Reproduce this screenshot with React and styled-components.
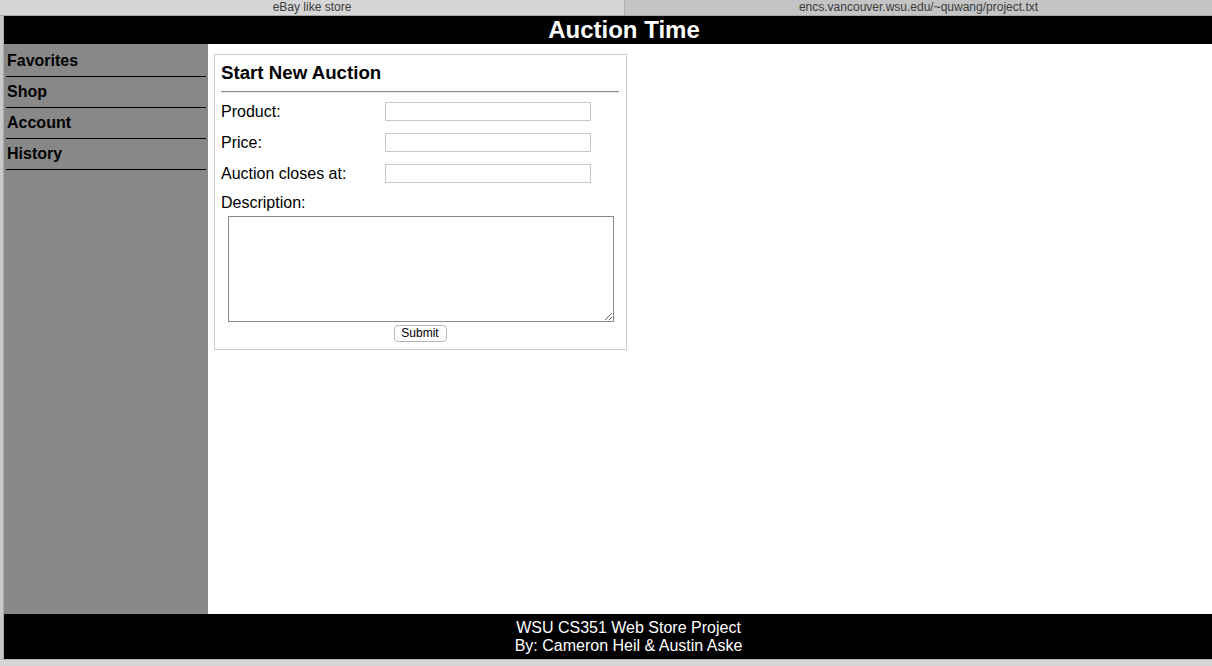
import React from "react"
import styled, { createGlobalStyle } from "styled-components"

const GlobalStyle = createGlobalStyle`
  html, body {
    margin: 0;
    padding: 0;
    background: #fff;
    font-family: "Liberation Sans", Arial, sans-serif;
    overflow: hidden;
  }
`

const Screen = styled.div`
  width: 1212px;
  height: 666px;
  display: flex;
  flex-direction: column;
`

const TabBar = styled.div`
  height: 15px;
  display: flex;
  border-bottom: 1px solid #a6a6a6;
  flex-shrink: 0;
`

const Tab = styled.div`
  flex: ${p => p.grow};
  background: ${p => (p.active ? "#d6d6d6" : "#c4c4c4")};
  border-left: ${p => (p.active ? "none" : "1px solid #adadad")};
  color: #3c3c3c;
  font-size: 12px;
  line-height: 14px;
  text-align: center;
  white-space: nowrap;
  overflow: hidden;
`

const WindowRow = styled.div`
  flex: 1;
  display: flex;
  min-height: 0;
`

const EdgeStrip = styled.div`
  width: 3px;
  background: #c9c9c9;
  border-right: 1px solid #a9a9a9;
  flex-shrink: 0;
`

const Page = styled.div`
  flex: 1;
  display: flex;
  flex-direction: column;
  min-width: 0;
`

const Header = styled.h1`
  margin: 0;
  height: 28px;
  background: #000;
  color: #fff;
  font-size: 24px;
  font-weight: bold;
  line-height: 28px;
  text-align: center;
  padding-left: 32px;
`

const Body = styled.div`
  flex: 1;
  display: flex;
  min-height: 0;
`

const Sidebar = styled.nav`
  width: 204px;
  background: #888888;
  padding-top: 2px;
  flex-shrink: 0;
`

const NavItem = styled.div`
  margin: 0 2px;
  height: 30px;
  line-height: 30px;
  border-bottom: 1px solid #000;
  padding-left: 1px;
  font-size: 16px;
  font-weight: bold;
  color: #000;
`

const Main = styled.main`
  flex: 1;
  padding: 10px 6px;
`

const Card = styled.form`
  width: 398px;
  border: 1px solid #cccccc;
  padding: 7px 7px 7px 6px;
  display: flex;
  flex-direction: column;
`

const Title = styled.h3`
  margin: 0 0 7px;
  font-size: 18.7px;
  line-height: 22px;
  font-weight: bold;
`

const Rule = styled.hr`
  margin: 0 0 3px;
  height: 0;
  border: none;
  border-top: 1px solid #8a8a8a;
  border-bottom: 1px solid #e6e6e6;
`

const FieldGrid = styled.div`
  display: grid;
  grid-template-columns: 164px 206px;
  grid-auto-rows: 31px;
  align-items: center;
`

const Label = styled.label`
  font-size: 16px;
  line-height: 18px;
  color: #000;
`

const TextInput = styled.input`
  box-sizing: border-box;
  width: 206px;
  height: 19px;
  border: 1px solid #c8c8c8;
  margin: 0;
  padding: 0 3px;
`

const DescLabel = styled(Label)`
  margin-top: 5px;
`

const TextArea = styled.textarea`
  box-sizing: border-box;
  margin: 4px 0 0 7px;
  width: 386px;
  height: 106px;
  border: 1px solid #8a8a8a;
  resize: both;
  padding: 2px;
  font-family: "Liberation Mono", monospace;
`

const SubmitButton = styled.button`
  align-self: center;
  margin-top: 3px;
  height: 17px;
  width: 53px;
  padding: 0;
  background: #fff;
  border: 1px solid #b8b8b8;
  border-radius: 4px;
  font-family: "Liberation Sans", Arial, sans-serif;
  font-size: 12px;
  line-height: 15px;
  color: #000;
`

const Footer = styled.footer`
  height: 45px;
  background: #000;
  color: #fff;
  font-size: 16px;
  line-height: 18px;
  text-align: center;
  padding-left: 41px;
  padding-top: 5px;
  box-sizing: border-box;
  flex-shrink: 0;
`

const BottomStrip = styled.div`
  height: 6px;
  background: #d6d6d6;
  border-top: 1px solid #b4b4b4;
  flex-shrink: 0;
`

const navLinks = ["Favorites", "Shop", "Account", "History"]
const fields = ["Product:", "Price:", "Auction closes at:"]

export default function App() {
  return (
    <>
      <GlobalStyle />
      <Screen>
        <TabBar>
          <Tab grow="0 0 624px" active>eBay like store</Tab>
          <Tab grow="1">encs.vancouver.wsu.edu/~quwang/project.txt</Tab>
        </TabBar>
        <WindowRow>
          <EdgeStrip />
          <Page>
            <Header>Auction Time</Header>
            <Body>
              <Sidebar>
                {navLinks.map(n => (
                  <NavItem key={n}>{n}</NavItem>
                ))}
              </Sidebar>
              <Main>
                <Card onSubmit={e => e.preventDefault()}>
                  <Title>Start New Auction</Title>
                  <Rule />
                  <FieldGrid>
                    {fields.map(f => (
                      <React.Fragment key={f}>
                        <Label>{f}</Label>
                        <TextInput type="text" />
                      </React.Fragment>
                    ))}
                  </FieldGrid>
                  <DescLabel>Description:</DescLabel>
                  <TextArea />
                  <SubmitButton type="submit">Submit</SubmitButton>
                </Card>
              </Main>
            </Body>
            <Footer>
              WSU CS351 Web Store Project
              <br />
              By: Cameron Heil &amp; Austin Aske
            </Footer>
          </Page>
        </WindowRow>
        <BottomStrip />
      </Screen>
    </>
  )
}
